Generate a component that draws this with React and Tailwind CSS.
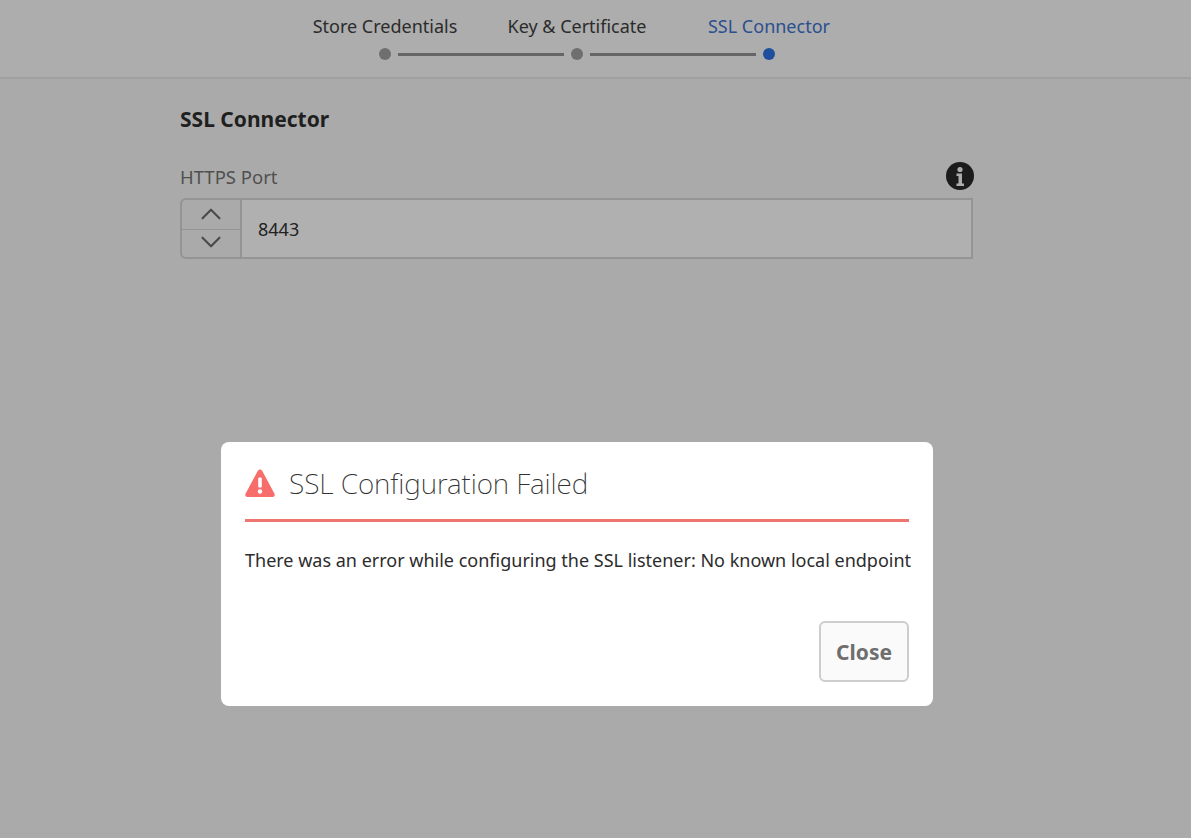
import { ChevronUp, ChevronDown } from "lucide-react";

const font = { fontFamily: '"Noto Sans", sans-serif' };

function Step({ label, active, first, last }) {
  return (
    <div className="w-[192px] flex flex-col items-center">
      <div className={`text-[18px] leading-[24px] whitespace-nowrap ${active ? "text-[#2b4f8f]" : "text-[#2b2b2b]"}`}>
        {label}
      </div>
      <div className="w-full flex items-center mt-[10px] h-3">
        <div className={`flex-1 h-[3px] mr-[7px] ${first ? "" : "bg-[#666666]"}`} />
        <div className={`w-3 h-3 rounded-full ${active ? "bg-[#1f4e9c]" : "bg-[#6f6f6f]"}`} />
        <div className={`flex-1 h-[3px] ml-[7px] ${last ? "" : "bg-[#666666]"}`} />
      </div>
    </div>
  );
}

export default function App() {
  return (
    <div className="relative h-[838px] w-full overflow-hidden bg-[#aaaaaa]" style={font}>
      <div className="w-full h-[79px] bg-[#adadad] border-b-2 border-[#a0a0a0]">
        <div className="w-[1154px] flex justify-center pt-[14px]">
          <Step label="Store Credentials" first />
          <Step label="Key & Certificate" />
          <Step label="SSL Connector" active last />
        </div>
      </div>

      <div className="w-[793px] ml-[180px] pt-[26px]">
        <h2 className="text-[21px] leading-[28px] font-bold text-[#1f1f1f]">SSL Connector</h2>
        <div className="flex items-start justify-between mt-[28px] h-[34px]">
          <label className="text-[18.5px] leading-[24px] text-[#505050] mt-[4px]">HTTPS Port</label>
          <svg viewBox="0 0 28 28" className="w-7 h-7 mt-[1px] mr-[-1px]">
            <circle cx="14" cy="14" r="14" fill="#1c1c1c" />
            <circle cx="14" cy="7.5" r="2.6" fill="#adadad" />
            <path d="M10.5 11.5h5.5v10h2v2.500h-7.500v-2.500h2v-7.500h-2z" fill="#adadad" />
          </svg>
        </div>
        <div className="flex h-[61px] mt-[3px]">
          <div className="w-[60px] flex flex-col border-2 border-r-0 border-[#949494] rounded-l-md text-[#4a4a4a]">
            <div className="h-[30px] flex items-center justify-center border-b border-[#949494]">
              <ChevronUp size={34} strokeWidth={1.5} className="shrink-0 mb-[2px]" />
            </div>
            <div className="h-[27px] flex items-center justify-center">
              <ChevronDown size={34} strokeWidth={1.5} className="shrink-0 mb-[3px]" />
            </div>
          </div>
          <div className="flex-1 flex items-center bg-[#b0b0b0] border-2 border-[#949494] pl-[16px] pt-[1px] text-[18px] text-[#222222]">
            8443
          </div>
        </div>
      </div>

      {/* Dialog */}
      <div className="absolute inset-0">
        <div className="w-[1154px] flex justify-center pt-[442px]">
          <div className="w-[712px] h-[264px] bg-white rounded-lg px-6 flex flex-col">
            <div className="h-[80px] flex items-center gap-[14px] border-b-[3px] border-[#ee7570] pt-[4px]">
              <svg viewBox="0 0 30 28" className="w-[30px] h-[28px]">
                <path d="M15 0.5c1 0 1.8.6 2.3 1.500l12.200 22.700c.8 1.500-.2 3.300-1.900 3.300H2.400C.7 28-.3 26.200.5 24.700L12.700 2C13.200 1.100 14 .5 15 .5z" fill="#f76d6b" />
                <rect x="13.200" y="8.500" width="3.600" height="10" rx="1" fill="#ffffff" />
                <circle cx="15" cy="22.500" r="2.200" fill="#ffffff" />
              </svg>
              <h1 className="text-[28px] leading-[40px] font-extralight tracking-[-0.08px] text-[#333333]">
                SSL Configuration Failed
              </h1>
            </div>
            <p className="text-[18px] leading-[24px] text-[#2c2c2c] mt-[26px] whitespace-nowrap">
              There was an error while configuring the SSL listener: No known local endpoint
            </p>
            <div className="flex justify-end mt-[49px]">
              <button className="w-[90px] h-[61px] pt-[2px] bg-[#fafafa] border-2 border-[#cdcdcd] rounded-md text-[21px] font-bold text-[#6e6e6e]">
                Close
              </button>
            </div>
          </div>
        </div>
      </div>
    </div>
  );
}
